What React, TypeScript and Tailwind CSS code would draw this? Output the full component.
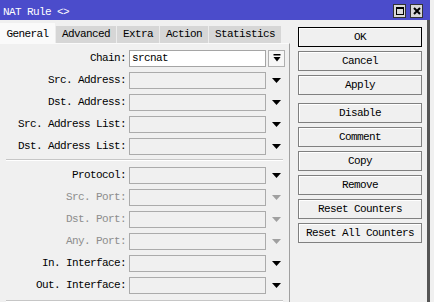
const font = { fontFamily: '"Liberation Mono", "DejaVu Sans Mono", monospace' };

const tabs = ["General", "Advanced", "Extra", "Action", "Statistics"];
const topRows = ["Src. Address:", "Dst. Address:", "Src. Address List:", "Dst. Address List:"];
const bottomRows = [
  { label: "Protocol:", disabled: false },
  { label: "Src. Port:", disabled: true },
  { label: "Dst. Port:", disabled: true },
  { label: "Any. Port:", disabled: true },
  { label: "In. Interface:", disabled: false },
  { label: "Out. Interface:", disabled: false },
];
const buttons = ["OK", "Cancel", "Apply", "Disable", "Comment", "Copy", "Remove", "Reset Counters", "Reset All Counters"];

const Arrow = ({ disabled }: { disabled?: boolean }) => (
  <svg width="9" height="5" viewBox="0 0 9 5">
    <polygon points="0,0 9,0 4.5,5" fill={disabled ? "#a0a0a0" : "#000"} />
  </svg>
);

const Row = ({ label, disabled, value }: { label: string; disabled?: boolean; value?: string }) => (
  <div className="flex h-[22px] items-center">
    <div className={`w-[126px] text-right whitespace-pre ${disabled ? "text-[#8d8d8d]" : "text-black"}`}>{label}</div>
    <div
      className={`ml-[3px] h-[17px] w-[137px] border px-[2px] leading-[15px] ${
        value !== undefined ? "border-[#a5a5a5] bg-white" : "border-[#ababab] bg-[#f0f0f0]"
      }`}
    >
      {value}
    </div>
    {value !== undefined ? (
      <div className="ml-[2px] flex h-[17px] w-[17px] items-center justify-center border border-[#b0b0b0] bg-[#f7f7f7]">
        <svg width="8" height="8" viewBox="0 0 8 8">
          <rect x="0.5" y="0" width="7" height="1.5" fill="#000" />
          <polygon points="0.5,3 7.5,3 4,7.5" fill="#000" />
        </svg>
      </div>
    ) : (
      <div className="ml-[2px] flex h-[17px] w-[17px] items-center justify-center">
        <Arrow disabled={disabled} />
      </div>
    )}
  </div>
);

const Separator = ({ className }: { className: string }) => (
  <div className={`ml-[6px] w-[277px] border-t border-[#c6c6c6] border-b border-b-white ${className}`} />
);

export default function App() {
  return (
    <div className="h-[302px] w-[434px] overflow-hidden bg-[#f0f0f0] text-[11px] tracking-[-0.6px]" style={font}>
      <div className="w-[430px]">
        {/* title bar */}
        <div className="flex h-[20px] items-center bg-[#4b4ccb] pt-[4px] pl-[3px] text-white">
          <span className="whitespace-pre">NAT Rule &lt;&gt;</span>
          <div className="ml-auto mr-[7px] flex gap-[4px] self-start">
            <div className="flex h-[14px] w-[13px] items-center justify-center border border-[#333] bg-[#d8d8d8]">
              <div className="h-[8px] w-[8px] border border-black border-t-2" />
            </div>
            <div className="flex h-[14px] w-[13px] items-center justify-center border border-[#333] bg-[#d8d8d8]">
              <svg width="8" height="8" viewBox="0 0 8 8">
                <path d="M1 1 L7 7 M7 1 L1 7" stroke="#000" strokeWidth="2" />
              </svg>
            </div>
          </div>
        </div>

        <div className="flex h-[282px] border-r-[3px] border-[#555]">
          {/* left: tabs + panel */}
          <div className="flex w-[290px] flex-col pt-[3px]">
            <div className="flex h-[20px] items-end">
              {tabs.map((tab, i) =>
                i === 0 ? (
                  <div key={tab} className="flex h-[20px] w-[55px] items-center justify-center bg-[#fafafa] pt-[2px] text-black">
                    {tab}
                  </div>
                ) : (
                  <div
                    key={tab}
                    className="flex h-[17px] items-center border-l border-[#ececec] bg-[#d6d6d6] px-[6px] text-black"
                  >
                    {tab}
                  </div>
                )
              )}
            </div>
            <div className="flex-1 border-r border-t border-r-[#a0a0a0] border-t-[#fafafa] pt-[3px]">
              <Row label="Chain:" value="srcnat" />
              {topRows.map((r) => (
                <Row key={r} label={r} />
              ))}
              <Separator className="mt-[2px] mb-[3px]" />
              {bottomRows.map((r) => (
                <Row key={r.label} label={r.label} disabled={r.disabled} />
              ))}
              <Separator className="mt-[4px]" />
            </div>
          </div>

          {/* right: buttons */}
          <div className="ml-[8px] flex w-[124px] flex-col gap-[4px] pt-[7px]">
            {buttons.map((b, i) => (
              <div
                key={b}
                className={`flex h-[20px] items-center justify-center whitespace-pre border bg-[#f0f0f0] text-black shadow-[inset_1px_1px_0_#fff] ${
                  i === 0 ? "border-black" : "border-[#808080]"
                } ${i === 3 ? "mt-[4px]" : ""}`}
              >
                {b}
              </div>
            ))}
          </div>
        </div>
      </div>
    </div>
  );
}
